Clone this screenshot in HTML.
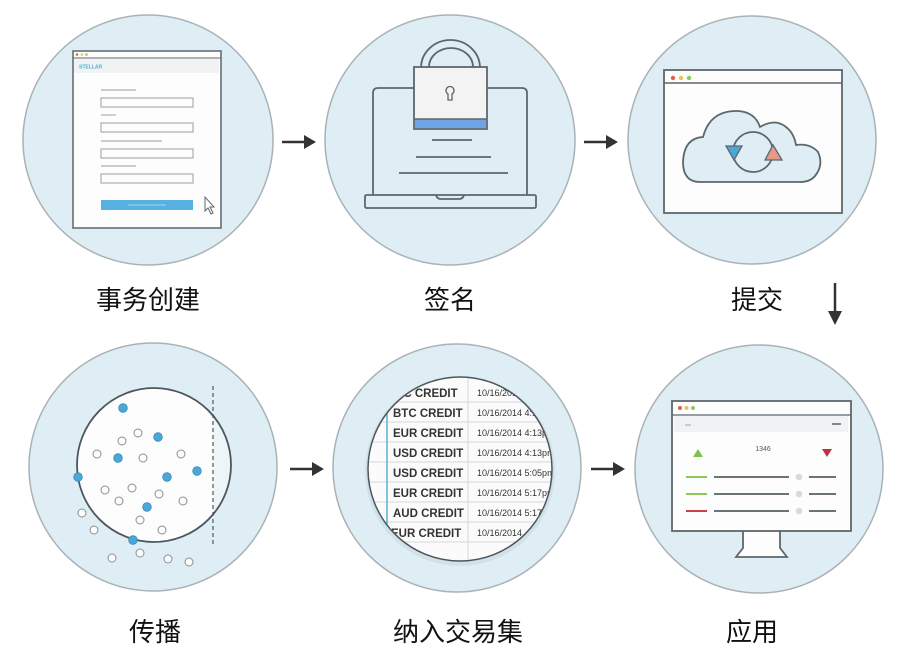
<!DOCTYPE html>
<html><head><meta charset="utf-8"><style>
html,body{margin:0;padding:0;background:#fff;}
svg{display:block}
.lbl{font-family:"Liberation Sans","Noto Sans CJK SC",sans-serif;font-size:26px;fill:#111;text-anchor:middle}
.ct{font-family:"Liberation Sans",sans-serif;font-weight:bold;font-size:11.5px;fill:#333}
.dt{font-family:"Liberation Sans",sans-serif;font-size:9px;fill:#333}
</style></head><body>
<svg width="898" height="656" viewBox="0 0 898 656" xmlns="http://www.w3.org/2000/svg">
<defs>
<clipPath id="mag"><circle cx="460" cy="469" r="92"/></clipPath>
<clipPath id="inner"><circle cx="154" cy="465" r="77"/></clipPath>
</defs>
<g fill="#dfeef5" stroke="#a9b2b6" stroke-width="1.5">
<circle cx="148" cy="140" r="125"/>
<circle cx="450" cy="140" r="125"/>
<circle cx="752" cy="140" r="124"/>
<circle cx="153" cy="467" r="124"/>
<circle cx="457" cy="468" r="124"/>
<circle cx="759" cy="469" r="124"/>
</g>
<g stroke="#333" stroke-width="2.5" fill="#333">
<line x1="282" y1="142" x2="305" y2="142"/><path d="M304,135 L316,142 L304,149z" stroke="none"/>
<line x1="584" y1="142" x2="607" y2="142"/><path d="M606,135 L618,142 L606,149z" stroke="none"/>
<line x1="835" y1="283" x2="835" y2="312"/><path d="M828,311 L835,325 L842,311z" stroke="none"/>
<line x1="290" y1="469" x2="313" y2="469"/><path d="M312,462 L324,469 L312,476z" stroke="none"/>
<line x1="591" y1="469" x2="614" y2="469"/><path d="M613,462 L625,469 L613,476z" stroke="none"/>
</g>
<!-- 1 form -->
<rect x="73" y="51" width="148" height="177" fill="#fdfdfd" stroke="#5d666c" stroke-width="1.5"/>
<line x1="73" y1="58" x2="221" y2="58" stroke="#5d666c" stroke-width="1"/>
<circle cx="77" cy="54.5" r="1.3" fill="#e0634a"/><circle cx="82" cy="54.5" r="1.3" fill="#f2c15a"/><circle cx="86.5" cy="54.5" r="1.3" fill="#8ccc5a"/>
<rect x="74" y="59" width="145" height="14" fill="#f0f2f3"/>
<text x="79" y="68.5" font-family="Liberation Sans" font-size="5" font-weight="bold" fill="#4eb0dc">STELLAR</text>
<g stroke="#aab0b4" stroke-width="1.2" fill="none">
<line x1="101" y1="90" x2="136" y2="90"/><rect x="101" y="98" width="92" height="9"/>
<line x1="101" y1="115" x2="116" y2="115"/><rect x="101" y="123" width="92" height="9"/>
<line x1="101" y1="141" x2="162" y2="141"/><rect x="101" y="149" width="92" height="9"/>
<line x1="101" y1="166" x2="136" y2="166"/><rect x="101" y="174" width="92" height="9"/>
</g>
<rect x="101" y="200" width="92" height="10" fill="#56b1e0"/>
<line x1="128" y1="205" x2="166" y2="205" stroke="#a8d6ef" stroke-width="1"/>
<path d="M205,197 L205,211 L208,208 L211,214 L213,213 L210,207 L214,207z" fill="#fff" stroke="#5d666c" stroke-width="1"/>
<!-- 2 laptop -->
<g stroke="#5d666c" stroke-width="1.8" fill="none">
<path d="M373,195 L373,93 Q373,88 378,88 L522,88 Q527,88 527,93 L527,195"/>
<rect x="365" y="195" width="171" height="13" rx="1.5"/>
<path d="M436,195 Q437,199 441,199 L459,199 Q463,199 464,195"/>
<line x1="432" y1="140" x2="472" y2="140"/><line x1="416" y1="157" x2="491" y2="157"/><line x1="399" y1="173" x2="508" y2="173"/>
<path d="M421,67 L421,68 A29.5,28 0 0 1 480,68 L480,67"/>
<path d="M429,67 A22,19 0 0 1 473,67"/>
</g>
<rect x="414" y="67" width="73" height="62" fill="#f3f3f3" stroke="#5d666c" stroke-width="1.8"/>
<rect x="415" y="119" width="71" height="9" fill="#6ea3e6"/>
<line x1="414" y1="119" x2="487" y2="119" stroke="#5d666c" stroke-width="1.5"/>
<path d="M448,94 A4,4 0 1 1 452,94 L452,100 L448,100z" fill="none" stroke="#5d666c" stroke-width="1.3"/>
<!-- 3 cloud -->
<rect x="664" y="70" width="178" height="143" fill="#fdfdfd" stroke="#5d666c" stroke-width="1.8"/>
<line x1="664" y1="83" x2="842" y2="83" stroke="#5d666c" stroke-width="1.5"/>
<circle cx="673" cy="78" r="2.2" fill="#e0634a"/><circle cx="681" cy="78" r="2.2" fill="#f2c15a"/><circle cx="689" cy="78" r="2.2" fill="#8ccc5a"/>
<path d="M700,182 Q683,182 683,162 Q684,138 703,137 Q710,110 738,111 Q755,112 760,127 Q775,118 786,127 Q794,133 796,145 Q810,143 818,152 Q824,165 815,176 Q810,182 800,182z" fill="#dfeef5" stroke="#5d666c" stroke-width="1.8"/>
<circle cx="753" cy="152" r="20" fill="none" stroke="#5d666c" stroke-width="1.8"/>
<path d="M726,146 L742,146 L734,160z" fill="#4aa8d8" stroke="#5d666c" stroke-width="1.3"/>
<path d="M765,160 L782,160 L773,145z" fill="#e89a8a" stroke="#5d666c" stroke-width="1.3"/>
<!-- 4 dots -->
<circle cx="154" cy="465" r="77" fill="#fdfdfd"/>
<rect x="213" y="380" width="30" height="170" fill="#eef5f9" clip-path="url(#inner)"/>
<circle cx="154" cy="465" r="77" fill="none" stroke="#4d565c" stroke-width="1.8"/>
<line x1="213" y1="386" x2="213" y2="547" stroke="#4d565c" stroke-width="1.2" stroke-dasharray="4,3"/>
<g fill="#fdfdfd" stroke="#889095" stroke-width="1">
<circle cx="138" cy="433" r="4"/><circle cx="122" cy="441" r="4"/><circle cx="97" cy="454" r="4"/><circle cx="143" cy="458" r="4"/><circle cx="181" cy="454" r="4"/><circle cx="105" cy="490" r="4"/><circle cx="132" cy="488" r="4"/><circle cx="159" cy="494" r="4"/><circle cx="119" cy="501" r="4"/><circle cx="183" cy="501" r="4"/><circle cx="82" cy="513" r="4"/><circle cx="140" cy="520" r="4"/><circle cx="94" cy="530" r="4"/><circle cx="162" cy="530" r="4"/><circle cx="112" cy="558" r="4"/><circle cx="140" cy="553" r="4"/><circle cx="168" cy="559" r="4"/><circle cx="189" cy="562" r="4"/>
</g>
<g fill="#4aa8d8" stroke="#3a8cb8" stroke-width="0.8">
<circle cx="123" cy="408" r="4.3"/><circle cx="158" cy="437" r="4.3"/><circle cx="118" cy="458" r="4.3"/><circle cx="197" cy="471" r="4.3"/><circle cx="167" cy="477" r="4.3"/><circle cx="78" cy="477" r="4.3"/><circle cx="147" cy="507" r="4.3"/><circle cx="133" cy="540" r="4.3"/>
</g>
<!-- 5 table -->
<circle cx="460" cy="471" r="95" fill="#c8d8e0" opacity="0.6"/>
<g clip-path="url(#mag)">
<rect x="360" y="370" width="200" height="200" fill="#fbfbfb"/>
<g stroke="#d3d7da" stroke-width="1">
<line x1="360" y1="402" x2="560" y2="402"/><line x1="360" y1="422" x2="560" y2="422"/><line x1="360" y1="442" x2="560" y2="442"/><line x1="360" y1="462" x2="560" y2="462"/><line x1="360" y1="482" x2="560" y2="482"/><line x1="360" y1="502" x2="560" y2="502"/><line x1="360" y1="522" x2="560" y2="522"/><line x1="360" y1="542" x2="560" y2="542"/>
<line x1="468" y1="370" x2="468" y2="570"/>
</g>
<line x1="387" y1="370" x2="387" y2="570" stroke="#56b1d8" stroke-width="1.5"/>
<text class="ct" x="388" y="397">BTC CREDIT</text><text class="dt" x="477" y="396">10/16/2014</text>
<text class="ct" x="393" y="417">BTC CREDIT</text><text class="dt" x="477" y="416">10/16/2014 4:13pm</text>
<text class="ct" x="393" y="437">EUR CREDIT</text><text class="dt" x="477" y="436">10/16/2014 4:13pm</text>
<text class="ct" x="393" y="457">USD CREDIT</text><text class="dt" x="477" y="456">10/16/2014 4:13pm</text>
<text class="ct" x="393" y="477">USD CREDIT</text><text class="dt" x="477" y="476">10/16/2014 5:05pm</text>
<text class="ct" x="393" y="497">EUR CREDIT</text><text class="dt" x="477" y="496">10/16/2014 5:17pm</text>
<text class="ct" x="393" y="517">AUD CREDIT</text><text class="dt" x="477" y="516">10/16/2014 5:17pm</text>
<text class="ct" x="391" y="537">EUR CREDIT</text><text class="dt" x="477" y="536">10/16/2014</text>
</g>
<circle cx="460" cy="469" r="92" fill="none" stroke="#4d565c" stroke-width="1.5"/>
<!-- 6 monitor -->
<path d="M743,531 L743,548 L736,557 L787,557 L780,548 L780,531" fill="#fdfdfd" stroke="#5d666c" stroke-width="1.8"/>
<rect x="672" y="401" width="179" height="130" fill="#fdfdfd" stroke="#5d666c" stroke-width="1.8"/>
<line x1="672" y1="415" x2="851" y2="415" stroke="#5d666c" stroke-width="1.3"/>
<circle cx="680" cy="408" r="2" fill="#e0634a"/><circle cx="686.5" cy="408" r="2" fill="#f2c15a"/><circle cx="693" cy="408" r="2" fill="#8ccc5a"/>
<rect x="674" y="416" width="174" height="16" fill="#f0f2f3"/>
<line x1="685" y1="425" x2="691" y2="425" stroke="#6bb8e0" stroke-width="1"/>
<line x1="832" y1="424" x2="841" y2="424" stroke="#5d666c" stroke-width="1.5"/>
<path d="M693,457 L703,457 L698,449z" fill="#7ec24a"/>
<path d="M822,449 L832,449 L827,457z" fill="#c0303a"/>
<text x="763" y="451" font-family="Liberation Sans" font-size="7" fill="#555" text-anchor="middle">1346</text>
<g stroke-width="2">
<line x1="686" y1="477" x2="707" y2="477" stroke="#8cc85a"/><line x1="686" y1="494" x2="707" y2="494" stroke="#8cc85a"/><line x1="686" y1="511" x2="707" y2="511" stroke="#c8404a"/>
<g stroke="#6a7378"><line x1="714" y1="477" x2="789" y2="477"/><line x1="714" y1="494" x2="789" y2="494"/><line x1="714" y1="511" x2="789" y2="511"/>
<line x1="809" y1="477" x2="836" y2="477"/><line x1="809" y1="494" x2="836" y2="494"/><line x1="809" y1="511" x2="836" y2="511"/></g>
</g>
<g fill="#d8dadc"><circle cx="799" cy="477" r="3.3"/><circle cx="799" cy="494" r="3.3"/><circle cx="799" cy="511" r="3.3"/></g>
<!-- labels -->
<text class="lbl" x="148" y="309">事务创建</text>
<text class="lbl" x="450" y="309">签名</text>
<text class="lbl" x="757" y="309">提交</text>
<text class="lbl" x="155" y="641">传播</text>
<text class="lbl" x="458" y="641">纳入交易集</text>
<text class="lbl" x="752" y="641">应用</text>
</svg>
</body></html>
